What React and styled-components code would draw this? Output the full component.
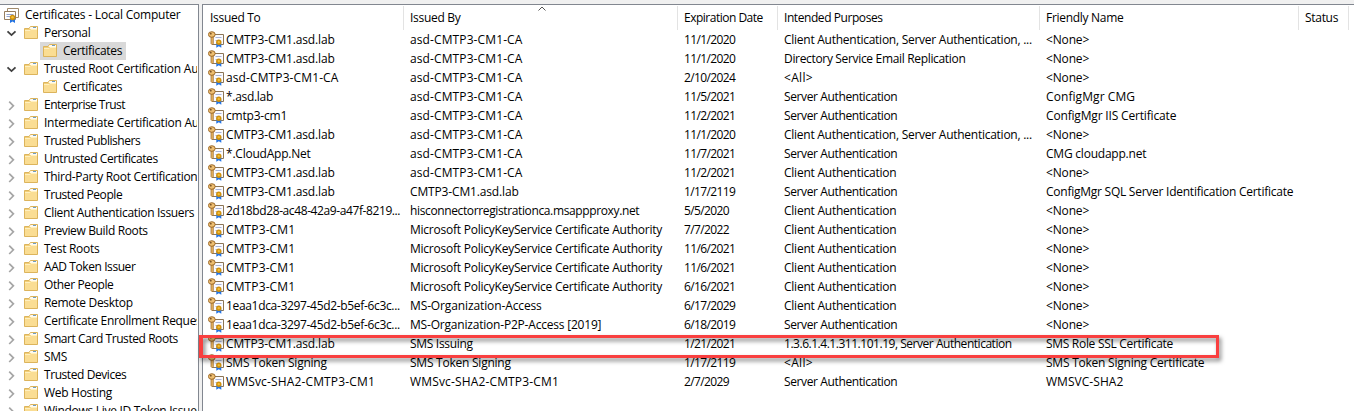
import React from "react";
import styled, { createGlobalStyle } from "styled-components";

const GlobalStyle = createGlobalStyle`
  body { margin: 0; background: #f0f0f0; overflow: hidden; }
  svg { flex: none; }
`;

const Window = styled.div`
  display: flex;
  gap: 3px;
  box-sizing: border-box;
  width: 1354px;
  height: 411px;
  padding-top: 4px;
  background: #f0f0f0;
  color: #000;
  font: 12px/18px "Open Sans", "Noto Sans", sans-serif;
  white-space: nowrap;
  overflow: hidden;
`;

const TreePane = styled.div`
  flex: none;
  box-sizing: border-box;
  width: 199px;
  padding: 1px 1px 0 0;
  border-top: 1px solid #828790;
  border-right: 1px solid #828790;
  background: #fff;
`;

const TreeRow = styled.div`
  display: flex;
  align-items: center;
  height: 18px;
  padding-left: ${(p) => [4, 5, 40][p.$level]}px;
  overflow: hidden;
`;

const Twisty = styled.span`
  display: flex;
  flex: none;
  width: 16px;
`;

const Node = styled.span`
  display: flex;
  flex: none;
  align-items: center;
  gap: 5px;
  height: 18px;
  padding: 0 4px 0 3px;
  background: ${(p) => (p.$selected ? "#d9d9d9" : "transparent")};
`;

const RootNode = styled(Node)`
  padding: 0;
`;

const Label = styled.span`
  letter-spacing: ${(p) => p.$track}px;
`;

const ListPane = styled.div`
  position: relative;
  flex: 1;
  border-top: 1px solid #828790;
  border-left: 1px solid #828790;
  background: #fff;
`;

const columns = "201px 274px 100px 262px 259px 50px";

const Header = styled.div`
  display: grid;
  grid-template-columns: ${columns};
  height: 24px;
  margin-top: 1px;
`;

const HeaderCell = styled.div`
  position: relative;
  padding: 3px 0 0 ${(p) => (p.$first ? 7 : 6)}px;
  border-right: 1px solid #e3e3e3;
`;

const SortMark = styled.svg`
  position: absolute;
  left: 133px;
  top: 0;
`;

const ListRow = styled.div`
  display: grid;
  grid-template-columns: ${columns};
  height: 19px;
`;

const Cell = styled.div`
  display: flex;
  align-items: center;
  padding-left: ${(p) => (p.$first ? 5 : 6)}px;
  gap: 1px;
  min-width: 0;
`;

const Highlight = styled.div`
  position: absolute;
  left: -4px;
  top: 330px;
  box-sizing: border-box;
  width: 1020px;
  height: 23px;
  border: 3px solid #f93f3f;
  border-left-width: 4px;
  filter: drop-shadow(2px 3px 2px rgba(0, 0, 0, 0.5));
`;

const Chevron = ({ open }) => (
  <svg width="12" height="12" viewBox="0 0 12 12" fill="none">
    {open ? (
      <path d="M2.5 4.3 6.5 8.1 10.5 4.3" stroke="#404040" strokeWidth="1.8" />
    ) : (
      <path d="M4.2 2.6 8.4 6.8 4.2 11" stroke="#a6a6a6" strokeWidth="1.7" />
    )}
  </svg>
);

const Folder = () => (
  <svg width="15" height="14" viewBox="0 0 15 14">
    <path d="M.5 12.5V2.5H5L6.5 .5H13.5V12.5Z" fill="#f3cf78" stroke="#dcb45c" />
    <path d="M6.5 1H13V3H5.5Z" fill="#fffaf0" />
    <path d="M9 1.5H12" stroke="#6f9fc5" />
    <path d="M1 4H13V12H1Z" fill="#fadd93" />
    <path d="M1 4.5H6L7 3.5H13" stroke="#fff0bf" fill="none" />
  </svg>
);

const Ribbon = ({ x, y }) => (
  <g transform={`translate(${x} ${y})`}>
    <path d="M.5 3.5H5.5V8L3 6.4 .5 8Z" fill="#2474e4" />
    <circle cx="3" cy="2.5" r="2.7" fill="#d0900c" />
    <circle cx="3" cy="2.3" r="1.2" fill="#f2c13e" />
  </g>
);

const CertStack = () => (
  <svg width="16" height="16" viewBox="0 0 16 16">
    <path d="M3.5 1.5H14.5V10.5H3.5Z" fill="#fff" stroke="#a08a6c" />
    <path d="M.5 4.5H11.5V12.5H.5Z" fill="#fff" stroke="#967d5e" />
    <path d="M2.5 7.5H9.5M2.5 9.5H6" stroke="#93a4cf" />
    <Ribbon x={5.5} y={8} />
  </svg>
);

const CertKey = () => (
  <svg width="17" height="17" viewBox="0 0 17 17">
    <path d="M4.5 3.5H15.5V13.5H4.5Z" fill="#fbfbff" stroke="#8c7555" />
    <path d="M7.5 6.5H13.5M7.5 9.5H9" stroke="#a7b4da" />
    <path d="M3 5H5.3V12.6L4.2 13.8 3 12.6Z" fill="#e9b765" stroke="#966326" strokeWidth=".7" />
    <ellipse cx="3.8" cy="3.5" rx="3.4" ry="2.8" fill="#edbe72" stroke="#94601f" strokeWidth=".9" />
    <circle cx="2.8" cy="2.7" r=".9" fill="#765025" />
    <Ribbon x={7.8} y={8.8} />
  </svg>
);

const DEFAULT_TRACK = -0.3;

// Letter spacing, in px, of the strings whose width differs from the default setting.
const tracking = {
  "Certificates - Local Computer": -0.2,
  "Trusted Root Certification Authorities": -0.24,
  "Enterprise Trust": -0.54,
  "Intermediate Certification Authorities": -0.23,
  "Trusted Publishers": -0.46,
  "Untrusted Certificates": -0.4,
  "Trusted People": -0.44,
  "Client Authentication Issuers": -0.34,
  "Preview Build Roots": -0.36,
  "AAD Token Issuer": -0.42,
  "Other People": -0.38,
  "Smart Card Trusted Roots": -0.43,
  "Trusted Devices": -0.43,
  "Expiration Date": -0.5,
  "Intended Purposes": -0.43,
  "CMTP3-CM1.asd.lab": -0.15,
  "asd-CMTP3-CM1-CA": 0.11,
  "cmtp3-cm1": -0.2,
  "*.CloudApp.Net": -0.22,
  "2d18bd28-ac48-42a9-a47f-8219...": -0.4,
  "1eaa1dca-3297-45d2-b5ef-6c3c...": -0.33,
  "CMTP3-CM1": 0.12,
  "SMS Token Signing": -0.24,
  "WMSvc-SHA2-CMTP3-CM1": 0.15,
  "Microsoft PolicyKeyService Certificate Authority": -0.235,
  "hisconnectorregistrationca.msappproxy.net": -0.37,
  "MS-Organization-Access": -0.12,
  "MS-Organization-P2P-Access [2019]": -0.2,
  "Client Authentication, Server Authentication, ...": -0.26,
  "Directory Service Email Replication": -0.33,
  "Server Authentication": -0.38,
  "Client Authentication": -0.24,
  "1.3.6.1.4.1.311.101.19, Server Authentication": -0.47,
  "<All>": 0.3,
  "<None>": -0.15,
  "ConfigMgr CMG": 0.08,
  "ConfigMgr IIS Certificate": -0.17,
  "ConfigMgr SQL Server Identification Certificate": -0.25,
  "CMG cloudapp.net": -0.22,
  "SMS Token Signing Certificate": -0.23,
  "WMSVC-SHA2": 0.04,
};

const Text = ({ children }) => {
  const isDate = /^\d+\/\d+\/\d+$/.test(children);
  return <Label $track={isDate ? -0.62 : tracking[children] ?? DEFAULT_TRACK}>{children}</Label>;
};

const tree = [
  ["Personal", 1, true],
  ["Certificates", 2, false, true],
  ["Trusted Root Certification Authorities", 1, true],
  ["Certificates", 2],
  ["Enterprise Trust", 1],
  ["Intermediate Certification Authorities", 1],
  ["Trusted Publishers", 1],
  ["Untrusted Certificates", 1],
  ["Third-Party Root Certification Authorities", 1],
  ["Trusted People", 1],
  ["Client Authentication Issuers", 1],
  ["Preview Build Roots", 1],
  ["Test Roots", 1],
  ["AAD Token Issuer", 1],
  ["Other People", 1],
  ["Remote Desktop", 1],
  ["Certificate Enrollment Requests", 1],
  ["Smart Card Trusted Roots", 1],
  ["SMS", 1],
  ["Trusted Devices", 1],
  ["Web Hosting", 1],
  ["Windows Live ID Token Issuer", 1],
];

const headings = ["Issued To", "Issued By", "Expiration Date", "Intended Purposes", "Friendly Name", "Status"];

const CA = "asd-CMTP3-CM1-CA";
const PKS = "Microsoft PolicyKeyService Certificate Authority";
const BOTH = "Client Authentication, Server Authentication, ...";
const SERVER = "Server Authentication";
const CLIENT = "Client Authentication";

const rows = [
  ["CMTP3-CM1.asd.lab", CA, "11/1/2020", BOTH, "<None>"],
  ["CMTP3-CM1.asd.lab", CA, "11/1/2020", "Directory Service Email Replication", "<None>"],
  ["asd-CMTP3-CM1-CA", CA, "2/10/2024", "<All>", "<None>"],
  ["*.asd.lab", CA, "11/5/2021", SERVER, "ConfigMgr CMG"],
  ["cmtp3-cm1", CA, "11/2/2021", SERVER, "ConfigMgr IIS Certificate"],
  ["CMTP3-CM1.asd.lab", CA, "11/1/2020", BOTH, "<None>"],
  ["*.CloudApp.Net", CA, "11/7/2021", SERVER, "CMG cloudapp.net"],
  ["CMTP3-CM1.asd.lab", CA, "11/2/2021", CLIENT, "<None>"],
  ["CMTP3-CM1.asd.lab", "CMTP3-CM1.asd.lab", "1/17/2119", SERVER, "ConfigMgr SQL Server Identification Certificate"],
  ["2d18bd28-ac48-42a9-a47f-8219...", "hisconnectorregistrationca.msappproxy.net", "5/5/2020", CLIENT, "<None>"],
  ["CMTP3-CM1", PKS, "7/7/2022", CLIENT, "<None>"],
  ["CMTP3-CM1", PKS, "11/6/2021", CLIENT, "<None>"],
  ["CMTP3-CM1", PKS, "11/6/2021", CLIENT, "<None>"],
  ["CMTP3-CM1", PKS, "6/16/2021", CLIENT, "<None>"],
  ["1eaa1dca-3297-45d2-b5ef-6c3c...", "MS-Organization-Access", "6/17/2029", CLIENT, "<None>"],
  ["1eaa1dca-3297-45d2-b5ef-6c3c...", "MS-Organization-P2P-Access [2019]", "6/18/2019", SERVER, "<None>"],
  ["CMTP3-CM1.asd.lab", "SMS Issuing", "1/21/2021", "1.3.6.1.4.1.311.101.19, Server Authentication", "SMS Role SSL Certificate"],
  ["SMS Token Signing", "SMS Token Signing", "1/17/2119", "<All>", "SMS Token Signing Certificate"],
  ["WMSvc-SHA2-CMTP3-CM1", "WMSvc-SHA2-CMTP3-CM1", "2/7/2029", SERVER, "WMSVC-SHA2"],
];

export default function App() {
  return (
    <Window>
      <GlobalStyle />
      <TreePane>
        <TreeRow $level={0}>
          <RootNode>
            <CertStack />
            <Text>Certificates - Local Computer</Text>
          </RootNode>
        </TreeRow>
        {tree.map(([name, level, open, selected], i) => (
          <TreeRow key={i} $level={level}>
            {level === 1 && (
              <Twisty>
                <Chevron open={open} />
              </Twisty>
            )}
            <Node $selected={selected}>
              <Folder />
              <Text>{name}</Text>
            </Node>
          </TreeRow>
        ))}
      </TreePane>
      <ListPane>
        <Header>
          {headings.map((h, i) => (
            <HeaderCell key={h} $first={i === 0}>
              <Text>{h}</Text>
              {i === 1 && (
                <SortMark width="10" height="5" viewBox="0 0 10 5">
                  <path d="M1.5 4.5 5 1 8.5 4.5" fill="none" stroke="#555" />
                </SortMark>
              )}
            </HeaderCell>
          ))}
        </Header>
        {rows.map((row, r) => (
          <ListRow key={r}>
            {row.map((text, c) => (
              <Cell key={c} $first={c === 0}>
                {c === 0 && <CertKey />}
                <Text>{text}</Text>
              </Cell>
            ))}
          </ListRow>
        ))}
        <Highlight />
      </ListPane>
    </Window>
  );
}
